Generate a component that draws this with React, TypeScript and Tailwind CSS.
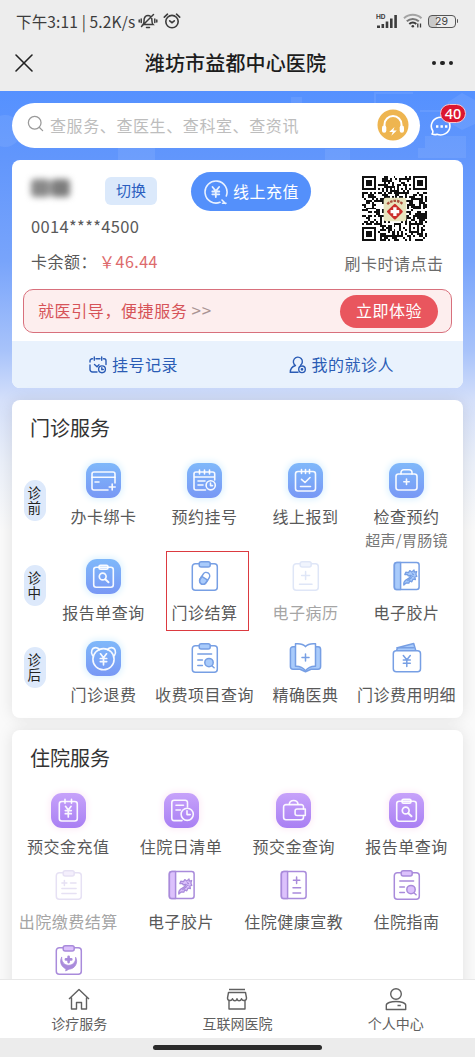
import type { ReactNode } from 'react';
import { Search, X } from 'lucide-react';

type IconProps = { name: string; tone: 'blue' | 'purple'; muted?: boolean };
type Service = { label?: string; icon: string; tile?: boolean; muted?: boolean; sub?: string; marked?: boolean };

const outpatient: { stage: string; items: Service[] }[] = [
  {
    stage: '诊前',
    items: [
      { label: '办卡绑卡', icon: 'card', tile: true },
      { label: '预约挂号', icon: 'calendarClock', tile: true },
      { label: '线上报到', icon: 'calendarCheck', tile: true },
      { label: '检查预约', icon: 'medkit', tile: true, sub: '超声/胃肠镜' },
    ],
  },
  {
    stage: '诊中',
    items: [
      { label: '报告单查询', icon: 'report', tile: true },
      { label: '门诊结算', icon: 'pill', marked: true },
      { label: '电子病历', icon: 'record', muted: true },
      { label: '电子胶片', icon: 'film' },
    ],
  },
  {
    stage: '诊后',
    items: [
      { label: '门诊退费', icon: 'bear', tile: true },
      { label: '收费项目查询', icon: 'feeList' },
      { label: '精确医典', icon: 'book' },
      { label: '门诊费用明细', icon: 'bills' },
    ],
  },
];

const inpatient: Service[] = [
  { label: '预交金充值', icon: 'prepay', tile: true },
  { label: '住院日清单', icon: 'dayList', tile: true },
  { label: '预交金查询', icon: 'wallet', tile: true },
  { label: '报告单查询', icon: 'report', tile: true },
  { label: '出院缴费结算', icon: 'checkout', muted: true },
  { label: '电子胶片', icon: 'film' },
  { label: '住院健康宣教', icon: 'notebook' },
  { label: '住院指南', icon: 'feeList' },
  { icon: 'chat' },
];

// Glyphs drawn in white on the gradient tiles
const tileIcons: Record<string, ReactNode> = {
  card: (
    <>
      <path d="M29 20V11a2 2 0 0 0-2-2H8a2 2 0 0 0-2 2v14a2 2 0 0 0 2 2h14" />
      <path d="M6 14.2h23M9 19h4M26.2 21v6M23.2 24h6" />
    </>
  ),
  calendarClock: (
    <>
      <path d="M27.7 17v-6a2 2 0 0 0-2-2H9a2 2 0 0 0-2 2v14a2 2 0 0 0 2 2h9.5M7 14h20.7" />
      <path d="M12.5 7v4M17.5 7v4M22.5 7v4M11 18h7M11 22h5" />
      <circle cx="23.7" cy="22.3" r="4.6" />
      <path d="M23.5 20v2.6h2" />
    </>
  ),
  calendarCheck: (
    <>
      <rect x="7.5" y="8.5" width="20" height="19.5" rx="2.5" />
      <path d="M13.5 6.5v4M17.5 6.5v4M21.5 6.5v4M13.5 16.3l3.5 3.2 5-5M12.5 23.5h10" />
    </>
  ),
  medkit: (
    <>
      <rect x="7" y="11" width="21" height="16" rx="2.5" />
      <path d="M12 11V9.5A2.8 2.8 0 0 1 14.8 6.7h5.4A2.8 2.8 0 0 1 23 9.5V11M17.5 16v5.4M14.8 18.7h5.4" />
    </>
  ),
  report: (
    <>
      <rect x="7.7" y="8.3" width="19.6" height="20" rx="2.5" />
      <rect x="13" y="6.2" width="9" height="4" rx="1.5" className="fill-white/40" />
      <circle cx="16.7" cy="17.5" r="3.4" strokeWidth="1.7" />
      <path d="M19.3 20.2l3.2 3" strokeWidth="2" />
    </>
  ),
  bear: (
    <>
      <circle cx="17.5" cy="18.2" r="10.6" />
      <path d="M6.6 14.6C4.2 11 6 6.6 9.7 6.6c1.700 0 3.100.8 3.900 2.200M28.4 14.6c2.400-3.600.6-8-3.100-8-1.700 0-3.100.8-3.900 2.200" />
      <path d="M14.5 12.8l3 4 3-4M17.5 16.8v7M14.3 17.5h6.4M14.3 20.6h6.4" strokeWidth="1.7" />
    </>
  ),
  prepay: (
    <>
      <rect x="8.3" y="8.5" width="18" height="19.5" rx="2.5" />
      <path d="M14 6.3v4M20.5 6.3v4" />
      <path d="M14.5 13.3l2.8 3.6 2.8-3.6M17.3 17v7M14.3 17.6h6M14.3 20.7h6" strokeWidth="1.7" />
    </>
  ),
  dayList: (
    <>
      <path d="M23.5 14V9.5A2.3 2.3 0 0 0 21.2 7.2H10.1a2.3 2.3 0 0 0-2.3 2.3v15.8a2.3 2.3 0 0 0 2.3 2.3H18" />
      <path d="M12 12.3h7.5M12 17h4.5" />
      <circle cx="23.2" cy="21.3" r="6.1" />
      <path d="M23 17.8v3.8h3.2" />
    </>
  ),
  wallet: (
    <>
      <path d="M27.5 16V14a2.4 2.4 0 0 0-2.4-2.4H10A2.4 2.4 0 0 0 7.6 14v10.3a2.4 2.4 0 0 0 2.4 2.4h15.1a2.4 2.4 0 0 0 2.4-2.4V22.5" />
      <path d="M13.3 11.3c.3-5 8.4-5 8.7 0M29.3 16h-8.2a2 2 0 0 0-2 2v2.5a2 2 0 0 0 2 2h8.2z" />
    </>
  ),
};

const clipboard = (
  <>
    <rect x="5.3" y="4.7" width="25" height="26.6" rx="3" />
    <rect x="12.2" y="2.8" width="11" height="5.2" rx="2" fill="var(--tint)" />
  </>
);

const bookCover = (
  <>
    <rect x="5.3" y="3.6" width="24.8" height="27" rx="2.5" />
    <path d="M8 3.6h3.6v27H8a2.6 2.6 0 0 1-2.6-2.6V6.2A2.6 2.6 0 0 1 8 3.6z" fill="var(--tint)" />
  </>
);

const outlineIcons: Record<string, ReactNode> = {
  pill: (
    <>
      {clipboard}
      <g transform="rotate(32 17.7 19.3)">
        <path d="M14.2 19.3v3a3.5 3.5 0 0 0 7 0v-3z" fill="var(--tint)" />
        <rect x="14.2" y="13" width="7" height="12.8" rx="3.5" />
      </g>
    </>
  ),
  record: (
    <>
      {clipboard}
      <path d="M17.6 12.6v8M13.6 16.6h8M11.5 25.3h12.5" />
    </>
  ),
  film: (
    <>
      {bookCover}
      <path
        d="M14.8 26c-.5-3 1.2-4.6 3.6-5.8 2.2-1.1 3.4-2 3.2-3.9l-2.3.6-1-1.6-2.5.2 1-2.3 2.7.5 1.3-2.1 1.9 1.5 2.3-2.2.3 2.3 2.3-.7-.7 2.6.9 2.3-2 .6.6 2.7-2.4-.5-1.2 2.6-2-1-1 2.4-2.3-.4c-1 .4-1.6 1-2.7 2.2z"
        fill="var(--tint)"
        strokeWidth="1.3"
      />
      <path d="M18.8 21.5l3.6-2.8M23.3 14.8l1.2.8M21.5 16.5l2.5 1" strokeWidth="1.3" />
    </>
  ),
  feeList: (
    <>
      {clipboard}
      <path d="M10.8 13h13.8M10.8 18.9h4.6M10.8 24.6h4.6M24.8 24.8l2.3 2" />
      <circle cx="22" cy="21.6" r="4.2" fill="var(--tint)" />
    </>
  ),
  book: (
    <>
      <path d="M7 5.8H5A2.6 2.6 0 0 0 2.4 8.4v17.2A2.6 2.6 0 0 0 5 28.2h7l5.5 2.6 5.5-2.6h7a2.6 2.6 0 0 0 2.6-2.6V8.4A2.6 2.6 0 0 0 30 5.8h-2z" fill="var(--tint)" />
      <path d="M17.5 5.6c-2.3-2.7-6-3.2-10-2.8v22.5c4-.2 7 .7 10 4.4 3-3.7 6-4.6 10-4.4V2.8c-4-.4-7.7.1-10 2.8z" fill="#fff" />
      <path d="M17.5 13v7M14 16.5h7" />
    </>
  ),
  bills: (
    <>
      <path d="M7.5 10L8.4 6.7 24.7 2.5l2.2 7.5z" fill="var(--tint)" />
      <path d="M8 6.8h16.5" />
      <rect x="4.3" y="9.7" width="27.2" height="21" rx="3" fill="#fff" />
      <path d="M14.3 14.5l3.5 4.2 3.5-4.2M17.8 18.7v6.8M14.3 19h7M14.3 22.2h7" />
    </>
  ),
  checkout: (
    <>
      {clipboard}
      <path d="M13.4 12.5v5M10.9 15h5M19.5 15h5.5M10.9 20.6h14.2M10.9 25.6h14.2" />
    </>
  ),
  notebook: (
    <>
      {bookCover}
      <path d="M20.6 9v6.4M17.4 12.2h6.4M17 19.8h7.6M17 25h7.6" />
    </>
  ),
  chat: (
    <>
      {clipboard}
      <path d="M10.6 14.4c-2.6 5 .2 9.7 4.4 11.4l-.3 2.2 3.2-1.8c6.2-.3 9.6-6.8 6.7-12 .6 5-3.3 8.2-7 8.1-4.2-.1-7-3.3-7-7.9z" fill="var(--ink)" strokeWidth=".8" />
      <path d="M17.6 13.7v5.4M14.9 16.4h5.4" strokeWidth="2.6" />
    </>
  ),
};

function ServiceIcon({ name, tone, muted }: IconProps) {
  const colors = muted
    ? tone === 'blue' ? '[--ink:#dfe6f7] [--tint:#f0f4fd]' : '[--ink:#e6e1f4] [--tint:#f4effc]'
    : tone === 'blue' ? '[--ink:#779fe4] [--tint:#a9cbfb]' : '[--ink:#a98bdb] [--tint:#dcc1fc]';
  return (
    <svg viewBox="0 0 35 35" className={`size-[35px] ${colors}`} fill="none" stroke="var(--ink)" strokeWidth="1.5" strokeLinecap="round" strokeLinejoin="round">
      {outlineIcons[name]}
    </svg>
  );
}

function TileIcon({ name, tone }: IconProps) {
  const colors = tone === 'blue'
    ? 'from-[#7fb8fa] to-[#7898f5] shadow-[0_0_6px_2px_#dff3ff]'
    : 'from-[#c7a2fa] to-[#a97ff3] shadow-[0_0_6px_2px_#fdeef8]';
  return (
    <div className={`size-[35px] rounded-[11px] bg-gradient-to-b ${colors}`}>
      <svg viewBox="0 0 35 35" className="size-full" fill="none" stroke="#fff" strokeOpacity="0.93" strokeWidth="1.6" strokeLinecap="round" strokeLinejoin="round">
        {tileIcons[name]}
      </svg>
    </div>
  );
}

function ServiceItem({ item, tone }: { item: Service; tone: 'blue' | 'purple' }) {
  return (
    <div className="relative flex flex-col items-center whitespace-nowrap">
      {item.tile ? <TileIcon name={item.icon} tone={tone} /> : <ServiceIcon name={item.icon} tone={tone} muted={item.muted} />}
      {item.label && (
        <span className={`mt-[6px] text-[16px] leading-6 tracking-[0.5px] ${item.muted ? 'text-[#a5a5a5]' : 'text-[#595959]'}`}>{item.label}</span>
      )}
      {item.sub && <span className="text-[15px] leading-6 tracking-[0.3px] text-[#777]">{item.sub}</span>}
      {item.marked && <div className="absolute top-[-8px] left-[12px] h-[80px] w-[83px] border border-[#dc3a40]" />}
    </div>
  );
}

const QR_SIZE = 33;

function isDark(x: number, y: number) {
  const corners = [[0, 0], [QR_SIZE - 7, 0], [0, QR_SIZE - 7]];
  for (const [cx, cy] of corners) {
    const dx = x - cx;
    const dy = y - cy;
    if (dx >= -1 && dx <= 7 && dy >= -1 && dy <= 7) {
      const ring = Math.max(Math.abs(dx - 3), Math.abs(dy - 3));
      return ring !== 2 && ring !== 4;
    }
  }
  const align = Math.max(Math.abs(x - 26), Math.abs(y - 26));
  if (align <= 2) return align !== 1;
  if (x === 6 || y === 6) return (x + y) % 2 === 0;
  let h = (x * 73856093) ^ (y * 19349663);
  h = Math.imul(h ^ (h >>> 13), 1274126177);
  return ((h ^ (h >>> 16)) & 1) === 1;
}

function QrCode() {
  const cells: string[] = [];
  for (let y = 0; y < QR_SIZE; y++) {
    for (let x = 0; x < QR_SIZE; x++) {
      if (isDark(x, y)) cells.push(`M${x} ${y}h1v1h-1z`);
    }
  }
  return (
    <svg viewBox="0 0 33 33" className="size-[65px]">
      <path d={cells.join('')} fill="#111" shapeRendering="crispEdges" />
      <rect x="11" y="11" width="11.5" height="12" rx="1.2" fill="#e8e5be" />
      <path d="M12.8 14.3q4-3.4 8 0" fill="none" stroke="#a9503c" strokeWidth="1.2" strokeDasharray="1.3 .5" />
      <rect x="13.7" y="15.1" width="6" height="6" rx=".6" transform="rotate(45 16.7 18.1)" fill="#cb2f2c" />
      <path d="M16.7 15.9v4.4M14.5 18.1h4.4" stroke="#fff" strokeWidth="1.7" />
    </svg>
  );
}

function StatusBar() {
  return (
    <div className="flex h-[42px] items-center justify-between pr-[17px] pl-4 text-[#3c3c3c]">
      <div className="flex items-center text-[15.5px] leading-6 tracking-[0.15px]">
        <span className="-mt-px w-[122px] whitespace-nowrap">下午3:11 | 5.2K/s</span>
        <svg viewBox="0 0 20 18" className="h-[18px] w-5" fill="none" stroke="currentColor" strokeWidth="1.5" strokeLinecap="round">
          <path d="M5 12.5c1.5-1.5.8-4 1.3-6C6.8 4.6 8.2 3.5 10 3.5s3.2 1.1 3.7 3c.5 2-.2 4.5 1.3 6zM8.5 15.5h3M15.5 2.5l-12 12M3.2 7v3.5M1.2 8v2M16.8 7v3.5M18.8 8v2" />
        </svg>
        <svg viewBox="0 0 18 18" className="ml-[5px] size-[18px]" fill="none" stroke="currentColor" strokeWidth="1.6" strokeLinecap="round">
          <circle cx="9" cy="9.6" r="6.2" />
          <path d="M1.3 5.2L4.5 2.2M16.7 5.2l-3.2-3M6.7 8.8L9 10.7l2.3-1.9" />
        </svg>
      </div>
      <div className="flex items-center">
        <svg viewBox="0 0 22 16" className="h-4 w-[22px]" fill="currentColor">
          <text x="0" y="6" fontSize="6.5" fontWeight="700" fontFamily="Inter, sans-serif">HD</text>
          <path d="M1 12.5h3V15H1zM5.5 11h2.6v4H5.5zM9.7 8.5h2.6V15H9.7zM14 5.5h2.6V15H14zM18.3 2h2.6v13h-2.6z" />
        </svg>
        <svg viewBox="0 0 20 16" className="ml-[5px] h-4 w-5" fill="none" strokeWidth="2">
          <path d="M1 5.3c5-4.6 12.5-4.6 17.5 0" stroke="#a4a4a4" />
          <path d="M3.8 8.3c3.5-3.2 8.5-3.2 12 0" stroke="#777" />
          <path d="M6.3 11c2-1.9 5-1.9 7 0" stroke="currentColor" />
          <circle cx="9.8" cy="13.3" r="1.3" fill="currentColor" stroke="none" />
          <path d="M14.8 10.5v4M17.5 10.5v4" stroke="currentColor" strokeWidth="1.3" />
        </svg>
        <div className="ml-[5px] flex h-[13px] w-[28px] items-center justify-center rounded-[4px] border-[1.5px] border-[#555] bg-gradient-to-r from-[#c9c9c9] from-30% to-transparent to-30% font-['Inter',sans-serif] text-[10.5px] leading-[11px]">
          29
        </div>
        <div className="ml-px h-1 w-[1.5px] rounded-r bg-[#555]" />
      </div>
    </div>
  );
}

function Header() {
  return (
    <header className="h-[91px] shrink-0 bg-[#ededed]">
      <StatusBar />
      <div className="grid h-[42px] grid-cols-[1fr_auto_1fr] items-center pr-[22px] pl-[18px]">
        <X className="-ml-[10px] size-[32px] text-[#222]" strokeWidth={1.2} />
        <h1 className="text-[20px] leading-7 font-medium tracking-[0.15px] text-[#1c1c1c]">潍坊市益都中心医院</h1>
        <div className="flex gap-[4px] justify-self-end">
          <span className="size-[4.5px] rounded-full bg-[#222]" />
          <span className="size-[4.5px] rounded-full bg-[#222]" />
          <span className="size-[4.5px] rounded-full bg-[#222]" />
        </div>
      </div>
    </header>
  );
}

function SearchRow() {
  return (
    <div className="flex items-center">
      <div className="flex h-[45px] w-[408px] items-center rounded-full bg-white pr-[11px] pl-[14px]">
        <Search className="mb-1 size-[19px] text-[#9a9a9a]" strokeWidth={1.6} />
        <span className="-mt-[2px] ml-[5px] flex-1 text-[16px] leading-6 tracking-[0.6px] text-[#bdbdbd]">查服务、查医生、查科室、查资讯</span>
        <svg viewBox="0 0 32 32" className="-mt-[2px] size-8">
          <circle cx="16" cy="16" r="15.5" fill="#eeb550" />
          <path d="M7.5 19v-3.5a8.5 8.5 0 0 1 17 0V19" fill="none" stroke="#fff" strokeWidth="2" />
          <rect x="5" y="16.5" width="4.3" height="7.3" rx="2.1" fill="#fff" />
          <rect x="22.7" y="16.5" width="4.3" height="7.3" rx="2.1" fill="#fff" />
          <path d="M17.5 18l-5.3 5h3.6l-1.5 3.8 5.5-5.2h-3.5z" fill="#fff" />
        </svg>
      </div>
      <div className="relative ml-[10px] size-[24px]">
        <svg viewBox="0 0 24 24" className="size-6" fill="none" stroke="#fff" strokeWidth="1.6">
          <path d="M2 20c1-1.2 1-2.3.7-3.3A9.3 8.8 0 1 1 7 20.2c-1.5.7-3 .6-5-.2z" strokeLinejoin="round" />
          <path d="M6 12.5h2.4M10.5 12.5h2.4M15 12.5h2.4" strokeWidth="2.3" />
        </svg>
        <span className="absolute top-[-10px] left-[10px] flex h-[19px] w-[26px] items-center justify-center rounded-full border border-[#f6c5cb] bg-[#dc1730] font-['Noto_Sans',sans-serif] text-[14.5px] leading-none font-medium text-white">
          40
        </span>
      </div>
    </div>
  );
}

function PatientCard() {
  return (
    <section className="mt-3 h-[228px] overflow-hidden rounded-lg bg-white">
      <div className="flex h-[129px] justify-between pr-5 pl-[19px]">
        <div>
          <div className="flex items-start">
            {/* Patient name is masked */}
            <div className="mt-[19px] flex h-[18px] w-[39px] gap-px blur-[3px]">
              <div className="flex-1 rounded bg-[#8a8a8a]" />
              <div className="flex-1 rounded bg-[#7d7d7d]" />
            </div>
            <button className="mt-[17px] ml-[35px] h-[28px] w-[52px] rounded-[6px] bg-[#dbe9fb] pb-[3px] text-[15px] leading-[25px] text-[#2c5fc0]">切换</button>
            <button className="mt-[12px] ml-[34px] flex h-[39px] w-[120px] items-center rounded-full bg-[#5490fb] pl-3 text-white">
              <svg viewBox="0 0 26 26" className="size-[26px]" fill="none" stroke="#e8f1ff" strokeWidth="1.6" strokeLinecap="round">
                <path d="M17 23.3a11 11 0 1 1 6.3-6.3M19 21l3.5 3.5M19.5 24.3h3.5" />
                <path d="M9.5 8l3.3 4 3.3-4M12.8 12v6M9.3 12.5h7M9.3 15.3h7" strokeWidth="1.8" />
              </svg>
              <span className="-mt-px ml-[4px] text-[16px] leading-6 tracking-[0.5px] whitespace-nowrap">线上充值</span>
            </button>
          </div>
          <p className="mt-[3px] text-[16.5px] leading-6 tracking-[0.35px] text-[#595959]">0014****4500</p>
          <p className="mt-[11px] flex text-[16px] leading-6 tracking-[0.5px] text-[#595959]">
            <span className="w-[68px]">卡余额：</span>
            <span className="text-[#dd6a6c]">￥46.44</span>
          </p>
        </div>
        <div className="flex w-[98px] flex-col items-center pt-[16px] whitespace-nowrap">
          <QrCode />
          <span className="mt-[10px] text-[16px] leading-6 tracking-[0.5px] text-[#6b6b6b]">刷卡时请点击</span>
        </div>
      </div>
      <div className="mx-[11px] flex h-11 items-center justify-between rounded-[10px] border border-[#d8707c] bg-[#fdeeee] pr-[13px] pl-[14px]">
        <span className="-mt-[2px] text-[16px] leading-6 tracking-[0.6px] text-[#d65358]">
          就医引导，便捷服务 <span className="text-[17px] text-[#aa9494]">&gt;&gt;</span>
        </span>
        <button className="h-[33px] w-[98px] rounded-full bg-[#e9565e] pb-[2px] text-[16px] leading-[31px] tracking-[0.5px] text-white">立即体验</button>
      </div>
      <div className="mt-2 grid h-[47px] grid-cols-2 bg-[#e9f2fd] text-[16px] tracking-[0.5px] text-[#2b5cb5]">
        <div className="flex items-center pl-[77px]">
          <svg viewBox="0 0 18 18" className="size-[18px]" fill="none" stroke="currentColor" strokeWidth="1.4" strokeLinecap="round">
            <path d="M3.5 2.8H3A2 2 0 0 0 1 4.8V6M1 9v4.5a2.5 2.5 0 0 0 2.5 2.5H8M7 2.8h4M14.5 2.8h.5a2 2 0 0 1 2 2V8.5M5.3 1v3.3M12.7 1v3.3M5.5 8.5L8 10.7l2-2" />
            <circle cx="13" cy="13.3" r="3.4" />
            <path d="M12.8 11.8v1.7h1.5" />
          </svg>
          <span className="-mt-[2px] ml-[5px]">挂号记录</span>
        </div>
        <div className="flex items-center pl-[51px]">
          <svg viewBox="0 0 18 18" className="size-[18px]" fill="none" stroke="currentColor" strokeWidth="1.4" strokeLinecap="round">
            <path d="M6.5 9.5a4.5 4.5 0 1 1 5-.2M6.5 9.5C3 10.5 1.3 13 1.3 16.3H9" />
            <circle cx="13" cy="13.3" r="3.3" />
            <circle cx="13" cy="13.3" r=".7" />
          </svg>
          <span className="-mt-[2px] ml-[5px]">我的就诊人</span>
        </div>
      </div>
    </section>
  );
}

function OutpatientCard() {
  return (
    <section className="mt-3 h-[318px] rounded-lg bg-white pt-[14px] shadow-[0_0_16px_rgba(0,0,0,0.1)]">
      <h2 className="pl-[18px] text-[20px] leading-7 text-[#333]">门诊服务</h2>
      <div className="mt-[21px]">
        {outpatient.map((row) => (
          <div key={row.stage} className="group flex h-[82px] first:h-[96px]">
            <div className="ml-3 w-[29px]">
              <div className="mt-[6px] flex h-[41px] w-[22px] items-center justify-center rounded-full bg-[#dde9fb] group-first:mt-[17px]">
                <span className="-mt-px -ml-px w-[14px] text-[13.5px] leading-[15px] break-all text-[#222]">{row.stage}</span>
              </div>
            </div>
            <div className="grid w-[404px] grid-cols-4 items-start">
              {row.items.map((item) => <ServiceItem key={item.icon} item={item} tone="blue" />)}
            </div>
          </div>
        ))}
      </div>
    </section>
  );
}

function InpatientCard() {
  return (
    <section className="mt-3 h-[318px] rounded-lg bg-white pt-[14px] shadow-[0_0_16px_rgba(0,0,0,0.1)]">
      <h2 className="pl-[18px] text-[20px] leading-7 text-[#333]">住院服务</h2>
      <div className="mt-[21px] grid auto-rows-[75px] grid-cols-4">
        {inpatient.map((item) => <ServiceItem key={item.icon} item={item} tone="purple" />)}
      </div>
    </section>
  );
}

function TabBar() {
  const tabs = [
    {
      label: '诊疗服务',
      icon: <path d="M2 12L12 2.5l10 9.5M4.5 10.5V22h5v-6.5h5V22h5V10.5" />,
    },
    {
      label: '互联网医院',
      icon: <path d="M4 2.5h16M3.5 5.5h17l1 5.5c0 3-4 3.5-5 .7-1 2.8-4 2.8-4.5 0-.5 2.8-3.5 2.8-4.5 0-1 2.8-5 2.3-5-.7zM4 14v8h16v-8" />,
    },
    {
      label: '个人中心',
      icon: (
        <>
          <circle cx="12" cy="7" r="5.3" />
          <path d="M2.3 22.5v-4.3c0-2.2 4.5-3.7 9.7-3.7s9.7 1.5 9.7 3.7v4.3zM13.5 18.5h3.3" />
        </>
      ),
    },
  ];
  return (
    <nav className="grid h-[59px] shrink-0 grid-cols-3 border-t border-[#e8e8e8] bg-white">
      {tabs.map((tab) => (
        <div key={tab.label} className="flex flex-col items-center pt-[7px] text-[#606060]">
          <svg viewBox="0 0 24 24" className="size-6" fill="none" stroke="currentColor" strokeWidth="1.4" strokeLinejoin="round">{tab.icon}</svg>
          <span className="mt-[2px] text-[14px] leading-5">{tab.label}</span>
        </div>
      ))}
    </nav>
  );
}

export default function App() {
  return (
    <div className="flex h-[1057px] w-[475px] flex-col overflow-hidden bg-[#ececec] font-['Noto_Sans_CJK_SC',sans-serif]">
      <Header />
      <main className="relative isolate min-h-0 flex-1 overflow-hidden bg-[#fafafa] bg-[linear-gradient(180deg,#5591ff_0px,#6196fc_65px,#78a4fb_170px,#a8c3fa_260px,#d5e0fa_310px,#eaeff9_370px,#fafafa_440px)] px-3 pt-3">
        {/* Faint cross and hexagon pattern behind the search bar */}
        <svg viewBox="0 0 475 75" className="absolute top-0 left-0 -z-10 h-[75px] w-full" fill="#fff" fillOpacity="0.08">
          <circle cx="5" cy="40" r="16" />
          <path d="M118 57h37v18h-37zM291 6h11v7h-11zM448 11l14-9 13 7v24l-13 6-14-8zM425 45h41v22h-48v-10h7zM325 58h25v14h-25z" />
          <path d="M375 15V2h38M420 20h25" fill="none" stroke="#fff" strokeOpacity="0.08" strokeWidth="2" />
        </svg>
        <SearchRow />
        <PatientCard />
        <OutpatientCard />
        <InpatientCard />
      </main>
      <TabBar />
      <div className="flex h-[19px] shrink-0 justify-center pt-[7px]">
        <div className="h-[5px] w-[169px] rounded-full bg-[#2b2b2b]" />
      </div>
    </div>
  );
}
